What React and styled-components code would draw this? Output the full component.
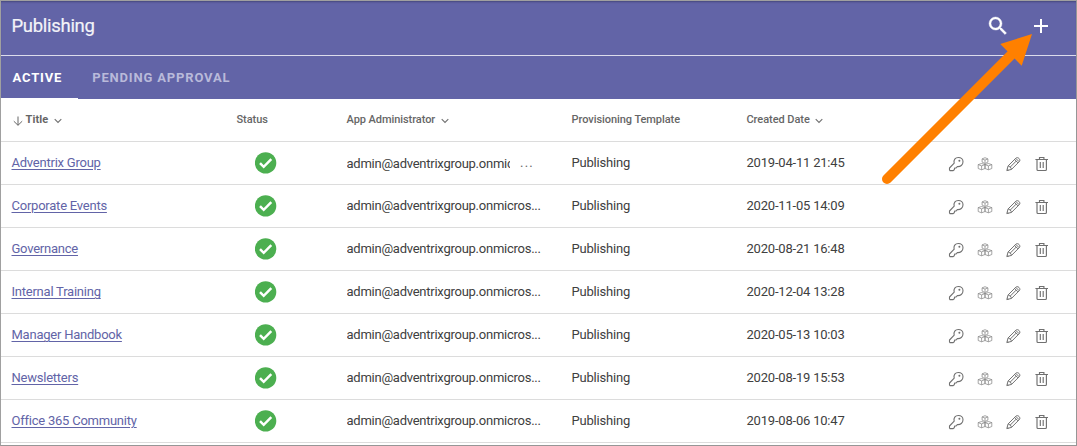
import React from "react";
import styled, { createGlobalStyle } from "styled-components";

const GlobalStyle = createGlobalStyle`
  *, *::before, *::after { box-sizing: border-box; }
  html, body { margin: 0; padding: 0; background: #fff; }
  body { font-family: Roboto, "Liberation Sans", sans-serif; overflow: hidden; }
`;

const Frame = styled.main`
  position: relative;
  width: 1077px;
  height: 446px;
  border: 1px solid #a0a0a0;
  border-right-color: #969696;
  border-bottom-color: #969696;
  overflow: hidden;
  background: #fff;
`;

const TitleBar = styled.header`
  display: flex;
  align-items: center;
  justify-content: space-between;
  height: 55px;
  padding: 0 23px 4px 10.5px;
  background: #6264a7;
  border-bottom: 1px solid #dcdcec;
  box-shadow: inset 0 2px 2px -1px #45477c;
`;

const Heading = styled.h1`
  margin: 0;
  color: #f3f3f8;
  font-size: 18.5px;
  font-weight: 400;
  line-height: 24px;
  letter-spacing: -0.3px;
  -webkit-text-stroke: 0.2px currentColor;
`;

const BarActions = styled.div`
  display: flex;
  align-items: center;
  gap: 19px;
`;

const BarButton = styled.button`
  display: flex;
  padding: 0;
  border: 0;
  background: none;
  color: #fff;
`;

const Tabs = styled.nav`
  display: flex;
  height: 43px;
  background: #6264a7;
`;

const Tab = styled.a`
  display: flex;
  align-items: center;
  height: 43px;
  padding: 1px ${(p) => (p.$active ? 15.5 : 14)}px 0 ${(p) => (p.$active ? 11.5 : 14.5)}px;
  color: ${(p) => (p.$active ? "#fff" : "#b9bada")};
  border-bottom: 1px solid ${(p) => (p.$active ? "#fff" : "transparent")};
  font-size: 13px;
  font-weight: 700;
  letter-spacing: ${(p) => (p.$active ? 0.85 : 0.83)}px;
  white-space: nowrap;
`;

const Row = styled.div`
  display: grid;
  grid-template-columns: 225px 110px 225px 175px 201.5px 1fr;
  align-items: center;
  height: 43px;
  padding-left: 10.5px;
  border-bottom: 1px solid #dcdcdc;
`;

const HeaderCell = styled.div`
  display: flex;
  align-items: center;
  height: 20px;
  margin-top: -2px;
  color: #666;
  font-size: 11px;
  font-weight: ${(p) => (p.$sorted ? 700 : 500)};
  letter-spacing: ${(p) => (p.$sorted ? 0.08 : -0.06)}px;
  white-space: nowrap;
`;

const Cell = styled.div`
  min-width: 0;
  color: #404040;
  font-size: 13px;
  line-height: 20px;
  letter-spacing: -0.2px;
  white-space: nowrap;
`;

const TitleLink = styled.a`
  color: #6264a7;
  text-decoration: underline;
  text-underline-offset: 2px;
  text-decoration-thickness: 1px;
  letter-spacing: -0.23px;
`;

const StatusCell = styled.div`
  display: flex;
  padding-left: 18px;
`;

const Email = styled.div`
  width: ${(p) => (p.$menu ? 163 : 210)}px;
  overflow: hidden;
  padding-top: ${(p) => (p.$menu ? 2 : 0)}px;
  letter-spacing: -0.25px;
`;

const AdminCell = styled(Cell)`
  display: flex;
`;

const Dots = styled.span`
  margin-left: 10.5px;
  padding-top: 1px;
  color: #666;
  letter-spacing: 1.2px;
`;

const RowActions = styled.div`
  display: flex;
  gap: 12.5px;
  padding-top: 2px;
  color: #707070;
`;

const Pointer = styled.svg`
  position: absolute;
  left: -1px;
  top: -1px;
  pointer-events: none;
`;

const Chevron = styled.svg`
  margin: 4px 0 0 5.5px;
`;

const SortArrow = styled.svg`
  margin: 4px 2.5px 0 1.5px;
`;

function Sortable() {
  return (
    <Chevron width="8" height="6" viewBox="0 0 8 6" fill="none" stroke="#707070" strokeWidth="1.1">
      <path d="M.7 1.2 4 4.5 7.3 1.2" />
    </Chevron>
  );
}

function CheckBadge() {
  return (
    <svg width="22" height="22" viewBox="0 0 22 22">
      <circle cx="10.600" cy="10.900" r="10.700" fill="#4caf50" />
      <path d="m5 11.100 3.700 3.700 7.600-7.600" fill="none" stroke="#fff" strokeWidth="2.500" />
    </svg>
  );
}

const lineIcon = { width: 16, height: 16, viewBox: "0 0 16 16", fill: "none", stroke: "currentColor", strokeWidth: 1 };

function KeyIcon() {
  return (
    <svg {...lineIcon} strokeWidth="1.1">
      <path d="M6.200 7.200C5.400 4 7.100 1.500 10.400 1.500c2.700 0 4.600 1.700 4.600 4.200 0 3.300-2.600 5.200-5.700 4.900L8.100 12H6.700L6.200 13.800 5.200 14.600H2L1.500 14v-2z" strokeLinejoin="round" />
      <circle cx="11.400" cy="4.800" r="1" fill="currentColor" stroke="none" />
    </svg>
  );
}

function CubesIcon() {
  return (
    <svg {...lineIcon} stroke="#808080" strokeWidth=".7" strokeLinejoin="round">
      <path d="M8 1.700 10.900 2.900V6.100L8 7.500 5.100 6.100V2.900zM5.100 2.900 8 4.100l2.900-1.200M8 4.100v3.400" />
      <path d="M4.600 7.500 8 8.600v3.900L4.600 13.800 1.200 12.500V8.600zM1.200 8.600l3.400 1.300L8 8.600M4.600 9.900v3.900" />
      <path d="m11.400 7.500 3.400 1.100v3.900l-3.400 1.300L8 12.500V8.600zM8 8.600l3.400 1.300 3.400-1.300M11.400 9.900v3.900" />
    </svg>
  );
}

function PencilIcon() {
  return (
    <svg {...lineIcon} strokeLinejoin="round">
      <path d="m1.800 14.600 1.300-4.700 7.800-7.700c1.900-1.900 5.300 1.500 3.400 3.400l-7.800 7.800zM3.100 9.900c1.500.1 3.200 1.900 3.400 3.500M9.600 3.500l3.400 3.400M10.800 2.400l3.300 3.300M5 11.300l6.200-6.200M2.300 13l1.200 1.200" />
    </svg>
  );
}

function TrashIcon() {
  return (
    <svg {...lineIcon} strokeWidth="1.15">
      <path d="M1.400 3.500h12.600M5.500 3.500V1.500h4.400v2M3 3.500v10q0 1 1 1h7.400q1 0 1-1v-10M6.300 6v6M9.200 6v6" />
    </svg>
  );
}

const sites = [
  ["Adventrix Group", "2019-04-11 21:45"],
  ["Corporate Events", "2020-11-05 14:09"],
  ["Governance", "2020-08-21 16:48"],
  ["Internal Training", "2020-12-04 13:28"],
  ["Manager Handbook", "2020-05-13 10:03"],
  ["Newsletters", "2020-08-19 15:53"],
  ["Office 365 Community", "2019-08-06 10:47"],
];

function SiteRow({ title, created, menu }) {
  return (
    <Row>
      <Cell><TitleLink>{title}</TitleLink></Cell>
      <StatusCell><CheckBadge /></StatusCell>
      <AdminCell>
        <Email $menu={menu}>{menu ? "admin@adventrixgroup.onmic" : "admin@adventrixgroup.onmicros..."}</Email>
        {menu && <Dots>...</Dots>}
      </AdminCell>
      <Cell>Publishing</Cell>
      <Cell>{created}</Cell>
      <RowActions>
        <KeyIcon />
        <CubesIcon />
        <PencilIcon />
        <TrashIcon />
      </RowActions>
    </Row>
  );
}

export default function App() {
  return (
    <>
      <GlobalStyle />
      <Frame>
        <TitleBar>
          <Heading>Publishing</Heading>
          <BarActions>
            <BarButton>
              <svg width="24" height="24" viewBox="0 0 24 24" fill="currentColor" stroke="currentColor" strokeWidth=".4">
                <path d="M15.500 14h-.79l-.28-.27A6.471 6.471 0 0 0 16 9.500 6.500 6.500 0 1 0 9.500 16c1.610 0 3.090-.59 4.230-1.570l.27.280v.790l5 4.990L20.490 19l-4.990-5zm-6 0C7.010 14 5 11.990 5 9.500S7.010 5 9.500 5 14 7.010 14 9.500 11.990 14 9.500 14z" />
              </svg>
            </BarButton>
            <BarButton>
              <svg width="24" height="24" viewBox="0 0 24 24" fill="currentColor">
                <path d="M19 13h-6v6h-2v-6H5v-2h6V5h2v6h6v2z" />
              </svg>
            </BarButton>
          </BarActions>
        </TitleBar>
        <Tabs>
          <Tab $active>ACTIVE</Tab>
          <Tab>PENDING APPROVAL</Tab>
        </Tabs>
        <Row>
          <HeaderCell $sorted>
            <SortArrow width="10" height="10" viewBox="0 0 10 10" fill="none" stroke="#666">
              <path d="M5 .5v8.700M.8 5.200 5 9.300l4.200-4.100" />
            </SortArrow>
            Title<Sortable />
          </HeaderCell>
          <HeaderCell>Status</HeaderCell>
          <HeaderCell>App Administrator<Sortable /></HeaderCell>
          <HeaderCell>Provisioning Template</HeaderCell>
          <HeaderCell>Created Date<Sortable /></HeaderCell>
        </Row>
        {sites.map(([title, created], i) => (
          <SiteRow key={title} title={title} created={created} menu={i === 0} />
        ))}
        <Pointer width="1077" height="446" viewBox="0 0 1077 446">
          <path d="M887 179 1013 53" stroke="#ff8000" strokeWidth="10" strokeLinecap="round" />
          <path d="m1032 34-31.700 10 21.400 21.700z" fill="#ff8000" />
        </Pointer>
      </Frame>
    </>
  );
}
